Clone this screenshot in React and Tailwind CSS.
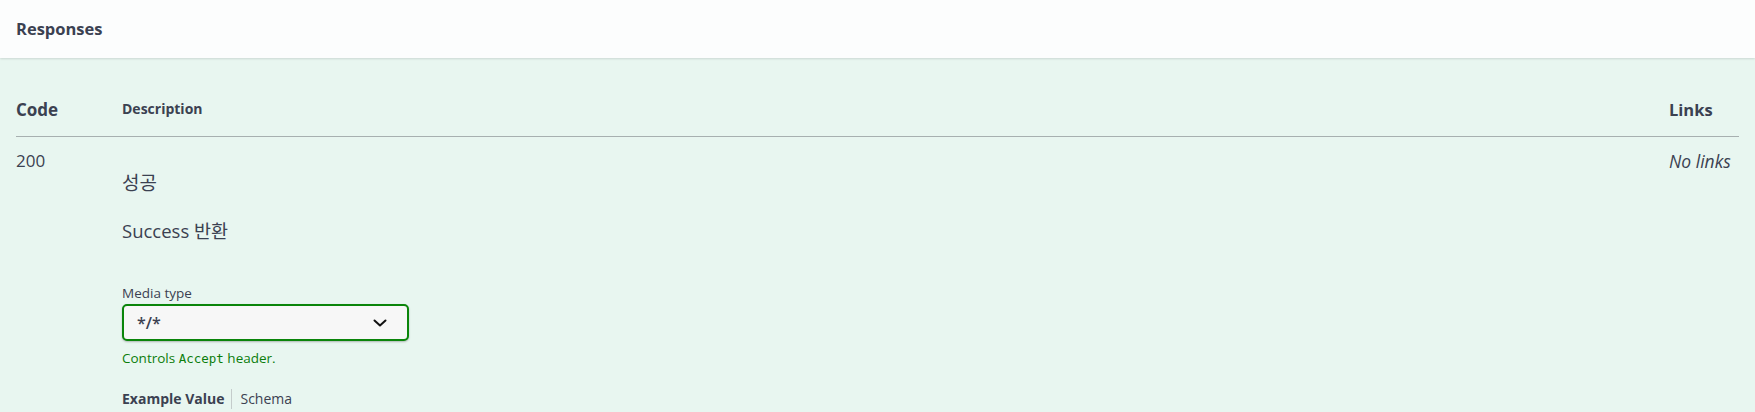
const FONT = { fontFamily: '"Open Sans", "Noto Sans CJK KR", sans-serif' }

function Chevron() {
  return (
    <svg width="14" height="8" viewBox="0 0 14 8" fill="none" className="text-[#111]">
      <path d="M1.5 1.5 7 6.5l5.5-5" stroke="currentColor" strokeWidth="2" strokeLinecap="round" strokeLinejoin="round" />
    </svg>
  )
}

export default function App() {
  return (
    <div className="w-[1755px] h-[412px] overflow-hidden bg-[#e8f6f0] text-[#3b4151]" style={FONT}>
      {/* Section header */}
      <div className="h-[58px] flex items-center px-4 bg-[#fcfdfd] shadow-[0_1px_2px_rgba(0,0,0,0.12)] relative">
        <h4 className="text-[16.5px] font-bold">Responses</h4>
      </div>

      <div className="px-4 pt-[40px]">
        {/* Table head */}
        <div className="flex items-center pb-[14px] border-b border-[#a7b0b0]">
          <div className="w-[106px] text-[17px] leading-6 font-bold">Code</div>
          <div className="flex-1 text-[14px] leading-6 font-bold -mt-[2px]">Description</div>
          <div className="w-[70px] text-[16.5px] leading-6 font-bold">Links</div>
        </div>

        {/* Row 200 */}
        <div className="flex">
          <div className="w-[106px] pt-[12px] text-[17px] leading-6">200</div>
          <div className="flex-1 pt-[32px]">
            <p className="text-[19px] leading-7">성공</p>
            <p className="mt-[20px] text-[18.5px] leading-7">Success 반환</p>

            <div className="mt-[39px] text-[13.5px] leading-[18px]">Media type</div>
            <div className="mt-[2px] w-[287px] h-[37px] flex items-center justify-between pl-[13px] pr-[20px] bg-[#f7f7f7] border-2 border-[#0a850a] rounded-[5px] shadow-[0_1px_2px_rgba(0,0,0,0.25)]">
              <span className="text-[16px] font-semibold">*/*</span>
              <Chevron />
            </div>
            <div className="mt-[9px] text-[13.5px] leading-4 text-[#0b7d0b]">
              Controls <code className="text-[12.5px]" style={{ fontFamily: '"DejaVu Sans Mono", monospace' }}>Accept</code> header.
            </div>

            <div className="mt-[22px] flex items-center text-[14px] leading-5">
              <span className="font-bold pr-[7px] border-r border-[#c4cccb]">Example Value</span>
              <span className="pl-[8px]">Schema</span>
            </div>
          </div>
          <div className="w-[70px] pt-[12px] text-[17.5px] leading-6 italic">No links</div>
        </div>
      </div>
    </div>
  )
}
